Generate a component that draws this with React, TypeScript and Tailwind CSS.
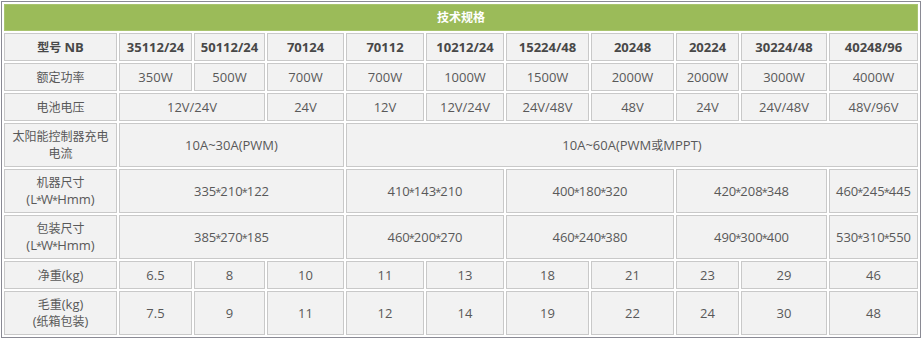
import React from "react";

type Cell = { t: React.ReactNode; span?: number };

const C = ({ children }: { children: React.ReactNode }) => (
  <span className="text-[12px]">{children}</span>
);

const dims = (s: string) => {
  const parts = s.split("*");
  return (
    <>
      {parts.map((p, i) => (
        <React.Fragment key={i}>
          {p}
          {i < parts.length - 1 && <span className="mx-[-1px] text-[11px]">*</span>}
        </React.Fragment>
      ))}
    </>
  );
};

const rows: { label: React.ReactNode; cells: Cell[]; bold?: boolean }[] = [
  {
    label: (
      <>
        <C>型号</C> NB
      </>
    ),
    bold: true,
    cells: [
      "35112/24",
      "50112/24",
      "70124",
      "70112",
      "10212/24",
      "15224/48",
      "20248",
      "20224",
      "30224/48",
      "40248/96",
    ].map((t) => ({ t })),
  },
  {
    label: <C>额定功率</C>,
    cells: ["350W", "500W", "700W", "700W", "1000W", "1500W", "2000W", "2000W", "3000W", "4000W"].map((t) => ({ t })),
  },
  {
    label: <C>电池电压</C>,
    cells: [
      { t: "12V/24V", span: 2 },
      { t: "24V" },
      { t: "12V" },
      { t: "12V/24V" },
      { t: "24V/48V" },
      { t: "48V" },
      { t: "24V" },
      { t: "24V/48V" },
      { t: "48V/96V" },
    ],
  },
  {
    label: <C>太阳能控制器充电电流</C>,
    cells: [
      { t: "10A~30A(PWM)", span: 3 },
      {
        t: (
          <>
            10A~60A(PWM<C>或</C>MPPT)
          </>
        ),
        span: 7,
      },
    ],
  },
  {
    label: (
      <>
        <C>机器尺寸</C>
        <br />
        {dims("(L*W*Hmm)")}
      </>
    ),
    cells: [
      { t: dims("335*210*122"), span: 3 },
      { t: dims("410*143*210"), span: 2 },
      { t: dims("400*180*320"), span: 2 },
      { t: dims("420*208*348"), span: 2 },
      { t: dims("460*245*445") },
    ],
  },
  {
    label: (
      <>
        <C>包装尺寸</C>
        <br />
        {dims("(L*W*Hmm)")}
      </>
    ),
    cells: [
      { t: dims("385*270*185"), span: 3 },
      { t: dims("460*200*270"), span: 2 },
      { t: dims("460*240*380"), span: 2 },
      { t: dims("490*300*400"), span: 2 },
      { t: dims("530*310*550") },
    ],
  },
  {
    label: (
      <>
        <C>净重</C>(kg)
      </>
    ),
    cells: ["6.5", "8", "10", "11", "13", "18", "21", "23", "29", "46"].map((t) => ({ t })),
  },
  {
    label: (
      <>
        <C>毛重</C>(kg)
        <br />(<C>纸箱包装</C>)
      </>
    ),
    cells: ["7.5", "9", "11", "12", "14", "19", "22", "24", "30", "48"].map((t) => ({ t })),
  },
];

const spanClass: Record<number, string> = {
  1: "col-span-1",
  2: "col-span-2",
  3: "col-span-3",
  7: "col-span-7",
};

export default function App() {
  return (
    <div className="w-[922px] h-[338px] bg-white overflow-hidden">
      <div
        className="ml-[1px] mt-[1px] w-[920px] border border-[#8a8a94] bg-white p-[2px]"
        style={{ fontFamily: '"Open Sans", "Noto Sans CJK SC", sans-serif' }}
      >
        <div className="grid grid-cols-[113px_73px_71px_77px_78px_78px_83px_83px_63px_86px_89px] grid-rows-[27px_28px_28px_28px_44px_44px_44px_28px_44px] gap-[2px] text-[13px] leading-[17px] text-[#595959]">
          <div className="col-span-11 flex items-center justify-center border border-[#a9c46f] bg-[#9bbb59] text-[12px] font-bold text-white">
            技术规格
          </div>
          {rows.map((r, i) => (
            <React.Fragment key={i}>
              <div
                className={`flex items-center justify-center border border-[#c9c9c9] bg-[#f2f2f2] px-[6px] text-center ${
                  r.bold ? "font-bold text-[#484848]" : ""
                }`}
              >
                <div>{r.label}</div>
              </div>
              {r.cells.map((c, j) => (
                <div
                  key={j}
                  className={`${spanClass[c.span ?? 1]} flex items-center justify-center border border-[#c9c9c9] bg-[#f2f2f2] text-center ${
                    r.bold ? "font-bold text-[#484848]" : ""
                  }`}
                >
                  {c.t}
                </div>
              ))}
            </React.Fragment>
          ))}
        </div>
      </div>
    </div>
  );
}
